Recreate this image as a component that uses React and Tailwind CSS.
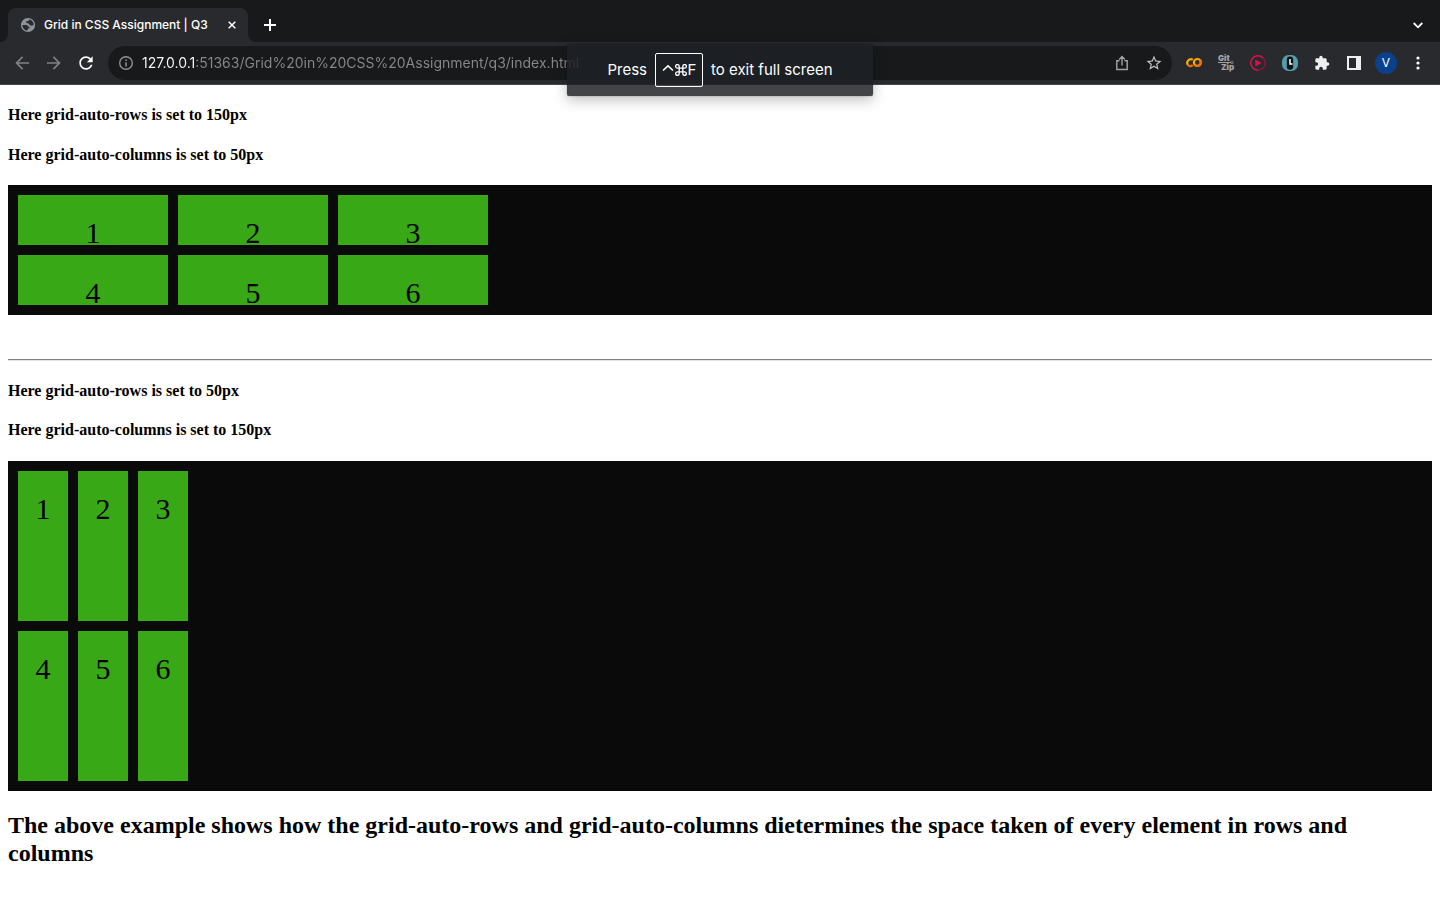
import React from "react";

const numbers = [1, 2, 3, 4, 5, 6];

function IconButton({ label, children, className = "" }) {
  return (
    <button type="button" aria-label={label} className={`flex size-8 shrink-0 items-center justify-center ${className}`}>
      {children}
    </button>
  );
}

function Material({ d, size = 20 }) {
  return (
    <svg width={size} height={size} viewBox="0 0 24 24" fill="currentColor" aria-hidden="true">
      <path d={d} />
    </svg>
  );
}

function TabStrip() {
  return (
    <div className="flex h-[42px] items-end bg-[#18191b] pl-2 pr-[6px]">
      <div className="relative flex h-[34px] w-60 items-center rounded-t-lg bg-[#292a2d] pl-3 pr-2">
        <svg className="absolute -left-2 bottom-0" width="8" height="8" viewBox="0 0 8 8" fill="#292a2d" aria-hidden="true">
          <path d="M8 0v8H0a8 8 0 0 0 8-8z" />
        </svg>
        <svg className="absolute -right-2 bottom-0" width="8" height="8" viewBox="0 0 8 8" fill="#292a2d" aria-hidden="true">
          <path d="M0 0v8h8a8 8 0 0 1-8-8z" />
        </svg>
        <svg width="16" height="16" viewBox="0 0 16 16" aria-hidden="true">
          <circle cx="8" cy="8" r="7.100" fill="#8d9499" />
          <path d="M2.300 8h3.500c1.300 0 1.900.7 1.900 1.600h1.600v1.700c-.9 0-1.700.6-1.900 2.300-2.900-.3-5-2.700-5.100-5.600z" fill="#292a2d" />
          <path d="M9.300 2.400c-.2 1-.8 1.600-1.800 1.600-1 .1-1.500.7-1.300 1.500.3.8 1.500.7 2.400 1 .9.400.8 1.600 1.700 1.900 1.100.3 2.100-.5 3.300-.2.3-2.900-1.600-5.300-4.300-5.800z" fill="#292a2d" />
        </svg>
        <span className="ml-2 flex-1 truncate font-['Inter',sans-serif] text-[12px] leading-4 font-medium text-white">Grid in CSS Assignment | Q3</span>
        <button type="button" aria-label="Close tab" className="flex size-4 items-center justify-center text-white">
          <svg width="8" height="8" viewBox="0 0 8 8" stroke="currentColor" strokeWidth="1.500" aria-hidden="true">
            <path d="M.7.7l6.600 6.600M7.300.7L.7 7.300" />
          </svg>
        </button>
      </div>
      <button type="button" aria-label="New tab" className="ml-2 flex h-[34px] w-7 items-center justify-center text-white">
        <svg width="12" height="12" viewBox="0 0 12 12" stroke="currentColor" strokeWidth="2" aria-hidden="true">
          <path d="M6 0v12M0 6h12" />
        </svg>
      </button>
      <button type="button" aria-label="Search tabs" className="ml-auto flex h-[34px] w-8 items-center justify-center text-white">
        <svg width="10" height="7" viewBox="0 0 10 7" fill="none" stroke="currentColor" strokeWidth="1.800" aria-hidden="true">
          <path d="M.7 1L5 5.300 9.300 1" />
        </svg>
      </button>
    </div>
  );
}

function Toolbar() {
  return (
    <div className="flex h-[43px] items-center border-b border-[#47484b] bg-[#292a2d] pl-[6px] pr-[6px]">
      <IconButton label="Back" className="text-[#808184]">
        <Material d="M20.500 11H7.830l5.590-5.590L12 4l-8 8 8 8 1.410-1.410L7.830 13H20.500v-2z" />
      </IconButton>
      <IconButton label="Forward" className="text-[#808184]">
        <Material d="M12 4l-1.410 1.410L16.170 11H3.500v2h12.670l-5.580 5.590L12 20l8-8z" />
      </IconButton>
      <IconButton label="Reload" className="text-white">
        <Material d="M17.650 6.350C16.200 4.900 14.210 4 12 4c-4.420 0-7.990 3.580-7.990 8s3.570 8 7.990 8c3.730 0 6.840-2.550 7.730-6h-2.080c-.82 2.330-3.040 4-5.650 4-3.310 0-6-2.690-6-6s2.690-6 6-6c1.660 0 3.140.69 4.220 1.780L13 11h7V4l-2.350 2.350z" />
      </IconButton>
      <div className="ml-[6px] flex h-[34px] min-w-0 flex-1 items-center rounded-full bg-[#18191b] pl-[10px] pr-[2px]">
        <button type="button" aria-label="View site information" className="flex size-4 shrink-0 items-center justify-center text-[#8d9297]">
          <svg width="16" height="16" viewBox="0 0 16 16" fill="none" stroke="currentColor" strokeWidth="1.400" aria-hidden="true">
            <circle cx="8" cy="8" r="6.300" />
            <path d="M8 7.200v4.200M8 4.400v1.500" strokeWidth="1.500" />
          </svg>
        </button>
        <input
          type="text"
          aria-label="Address"
          defaultValue="127.0.0.1:51363/Grid%20in%20CSS%20Assignment/q3/index.html"
          className="ml-2 min-w-0 flex-1 bg-[linear-gradient(90deg,#ffffff_54px,#87888b_54px)] bg-clip-text font-['Inter',sans-serif] text-[14px] leading-5 text-transparent caret-white outline-none"
        />
        <IconButton label="Share" className="text-[#a2a3a5]">
          <svg width="16" height="16" viewBox="0 0 16 16" fill="none" stroke="currentColor" strokeWidth="1.400" aria-hidden="true">
            <path d="M5.500 5.700H2.800v8.800h10.400V5.700h-2.700M8 10.500V2M5.200 4.400L8 1.600l2.800 2.800" />
          </svg>
        </IconButton>
        <IconButton label="Bookmark this tab" className="text-[#c0c1c3]">
          <Material size={18} d="M22 9.240l-7.190-.62L12 2 9.190 8.630 2 9.240l5.460 4.730L5.820 21 12 17.270 18.180 21l-1.630-7.030L22 9.240zM12 15.400l-3.760 2.270 1-4.280-3.320-2.880 4.380-.38L12 6.100l1.710 4.040 4.380.38-3.320 2.880 1 4.280L12 15.400z" />
        </IconButton>
      </div>
      <div className="ml-[6px] flex items-center">
        <IconButton label="Open in Colab">
          <svg width="16" height="16" viewBox="0 0 16 16" fill="none" strokeWidth="2.200" aria-hidden="true">
            <path d="M6.800 4.800A3.600 3.600 0 0 0 2 10" stroke="#f9ab00" />
            <path d="M2 10a3.600 3.600 0 0 0 4.800.2" stroke="#e8710a" />
            <circle cx="11.400" cy="7.500" r="3.500" stroke="#f9ab00" />
            <path d="M14 5A3.600 3.600 0 0 1 8.900 10" stroke="#e8710a" />
          </svg>
        </IconButton>
        <IconButton label="GitZip">
          <svg width="20" height="22" viewBox="-2 -3 20 22" fill="#a3a3a3" aria-hidden="true">
            <text x="0" y="6" fontFamily="Inter, sans-serif" fontWeight="900" fontSize="8">Git</text>
            <text x="3" y="15" fontFamily="Inter, sans-serif" fontWeight="900" fontSize="8">Zip</text>
            <path d="M0 7.500h13" stroke="#a3a3a3" />
            <circle cx="14" cy="7.500" r="1.200" fill="none" stroke="#a3a3a3" strokeWidth=".7" />
          </svg>
        </IconButton>
        <IconButton label="Video recorder">
          <svg width="16" height="16" viewBox="0 0 16 16" fill="none" aria-hidden="true">
            <circle cx="8" cy="8" r="7.200" stroke="#9e123f" strokeWidth="1.200" />
            <path d="M13.200 3A7.200 7.200 0 1 0 8 15.200" stroke="#d5124d" strokeWidth="1.400" />
            <path d="M5.300 4.500v7l6.500-3.500z" fill="#d5124d" />
          </svg>
        </IconButton>
        <IconButton label="Time tracker">
          <svg width="16" height="16" viewBox="0 0 16 16" aria-hidden="true">
            <rect width="16" height="16" rx="6.500" fill="#559dab" />
            <rect x="4.800" y="1.500" width="6.400" height="13.200" rx="3.200" fill="#111416" />
            <path d="M8 4v5h2.500" fill="none" stroke="#fff" strokeWidth="1.500" />
          </svg>
        </IconButton>
        <IconButton label="Extensions" className="text-[#eeeff1]">
          <Material size={16} d="M20.500 11H19V7c0-1.100-.9-2-2-2h-4V3.500C13 2.120 11.880 1 10.500 1S8 2.120 8 3.500V5H4c-1.100 0-1.990.9-1.990 2v3.800H3.500c1.490 0 2.700 1.210 2.700 2.700s-1.210 2.700-2.700 2.700H2V20c0 1.100.9 2 2 2h3.800v-1.500c0-1.490 1.210-2.700 2.700-2.700 1.490 0 2.700 1.210 2.700 2.700V22H17c1.100 0 2-.9 2-2v-4h1.500c1.380 0 2.500-1.120 2.500-2.500S21.880 11 20.500 11z" />
        </IconButton>
        <IconButton label="Side panel">
          <svg width="14" height="14" viewBox="0 0 14 14" fill="#eeeff1" fillRule="evenodd" aria-hidden="true">
            <path d="M0 0h14v14H0zM2 2v10h7V2z" />
          </svg>
        </IconButton>
        <IconButton label="Profile">
          <span className="flex size-[22px] items-center justify-center rounded-full bg-[#0b418c] font-['Inter',sans-serif] text-[12px] leading-4 text-white">V</span>
        </IconButton>
        <IconButton label="Menu">
          <svg width="4" height="14" viewBox="0 0 4 14" fill="#fff" aria-hidden="true">
            <circle cx="2" cy="2" r="1.600" />
            <circle cx="2" cy="7" r="1.600" />
            <circle cx="2" cy="12" r="1.600" />
          </svg>
        </IconButton>
      </div>
    </div>
  );
}

function ExitNotice() {
  return (
    <div role="status" className="absolute top-11 left-1/2 flex h-[52px] w-[306px] -translate-x-1/2 items-center justify-center gap-2 rounded-xs bg-[#1e2025]/84 font-['Inter',sans-serif] text-[15px] leading-5 whitespace-nowrap text-white shadow-[0_0_1px_rgba(0,0,0,0.8),0_4px_14px_rgba(0,0,0,0.25)]">
      <span>Press</span>
      <kbd className="flex h-[34px] w-12 items-center justify-center rounded-xs border border-white font-['Inter',sans-serif]">
        <svg width="13" height="14" viewBox="0 0 13 14" fill="none" stroke="currentColor" strokeWidth="1.600" aria-hidden="true">
          <path d="M1 7.500l5-4.700 5 4.700" />
        </svg>
        <svg width="12" height="12" viewBox="2 2 20 20" fill="none" stroke="currentColor" strokeWidth="2.200" aria-hidden="true">
          <path d="M15 6v12a3 3 0 1 0 3-3H6a3 3 0 1 0 3 3V6a3 3 0 1 0-3 3h12a3 3 0 1 0-3-3" />
        </svg>
        <span className="ml-px">F</span>
      </kbd>
      <span>to exit full screen</span>
    </div>
  );
}

function Cells({ className }) {
  return (
    <div className={`grid justify-start gap-[10px] bg-[#0a0a0a] p-[10px] ${className}`}>
      {numbers.map((n) => (
        <div key={n} className="bg-[#38a816] pt-5 text-center text-[30px] leading-[35px]">
          {n}
        </div>
      ))}
    </div>
  );
}

export default function App() {
  return (
    <div className="relative min-h-screen bg-white text-black">
      <header>
        <TabStrip />
        <Toolbar />
      </header>
      <ExitNotice />
      <main className="px-2 pt-[21px] font-['Liberation_Serif',serif] text-[16px] leading-[18px]">
        <h4 className="mb-[22px] font-bold">Here grid-auto-rows is set to 150px</h4>
        <h4 className="mb-[21px] font-bold">Here grid-auto-columns is set to 50px</h4>
        <Cells className="auto-rows-[50px] grid-cols-[repeat(3,150px)]" />
        <hr className="mt-11 mb-[21px] h-[2px] border-t border-b border-t-[#808080] border-b-[#e4e4e4]" />
        <h4 className="mb-[21px] font-bold">Here grid-auto-rows is set to 50px</h4>
        <h4 className="mb-[22px] font-bold">Here grid-auto-columns is set to 150px</h4>
        <Cells className="auto-rows-[150px] grid-cols-[repeat(3,50px)]" />
        <h2 className="mt-5 text-[24px] leading-7 font-bold">
          The above example shows how the grid-auto-rows and grid-auto-columns dietermines the space taken of every element in rows and columns
        </h2>
      </main>
    </div>
  );
}
